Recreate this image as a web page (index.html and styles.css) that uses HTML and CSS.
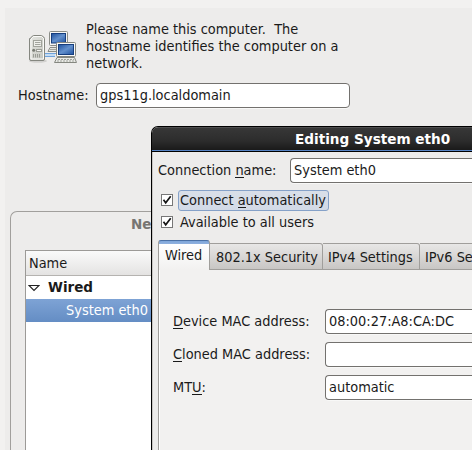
FILE: index.html
```html
<!DOCTYPE html>
<html lang="en">
<head>
<meta charset="utf-8">
<title>Network configuration</title>
<link rel="stylesheet" href="styles.css">
</head>
<body>
<main class="installer">
  <header class="intro">
    <svg class="intro-icon" width="48" height="34" viewBox="0 0 48 34">
      <defs>
        <linearGradient id="screen" x1="0" y1="0" x2="1" y2="1">
          <stop offset="0" stop-color="#2355a0"/><stop offset=".5" stop-color="#6390cc"/><stop offset="1" stop-color="#2456a3"/>
        </linearGradient>
        <linearGradient id="tower" x1="0" y1="0" x2="1" y2="1">
          <stop offset="0" stop-color="#e6e7e3"/><stop offset="1" stop-color="#c3c5be"/>
        </linearGradient>
      </defs>
      <ellipse cx="9" cy="31" rx="9" ry="1.800" fill="#d2d1cf"/>
      <rect x="20.500" y="1.500" width="18" height="14" rx="1" fill="#f6f6f4" stroke="#8b8d87"/>
      <rect x="22" y="3" width="15" height="10.500" fill="#163e7e"/>
      <rect x="23" y="4" width="13" height="8.500" fill="url(#screen)"/>
      <path d="M21 17.500h7v4h-9z" fill="#e4e5e1" stroke="#8b8d87"/>
      <path d="M21 19.500h6" stroke="#a4a69f"/>
      <path d="M16 23.500h11M16 26.500h10" stroke="#6fa3dc"/>
      <path d="M16 25h10" stroke="#c4dcf3" stroke-width="2"/>
      <path d="M1.500 8.500q0-1.500 3-3h8q3 1.500 3 3v20.500q0 1.500-1.500 1.500H2q-1.500 0-1.500-1.500V8.500z" fill="url(#tower)" stroke="#858780"/>
      <path d="M2 29V9l2.500-2.500h8l2 2V29z" fill="none" stroke="#fafaf8"/>
      <rect x="4.500" y="10.500" width="8" height="6" fill="#eeefeb" stroke="#a1a39c"/>
      <path d="M6 12.500h5.500M6 14.500h5.500" stroke="#a2a49d"/>
      <circle cx="4.700" cy="20.200" r="1.500" fill="#777a72"/>
      <rect x="7.500" y="19.500" width="5" height="2" fill="#f4f4f1" stroke="#9b9d96"/>
      <path d="M4.500 24v3.500M6.500 24v3.500M8.500 24v3.500M10.500 24v3.500" stroke="#9b9d96"/>
      <rect x="27.500" y="12.500" width="19" height="14" rx="1" fill="#f9f9f7" stroke="#858780"/>
      <rect x="29" y="14" width="16" height="11" fill="#163e7e"/>
      <rect x="30" y="15" width="14" height="9" fill="url(#screen)"/>
      <path d="M28 27.500h17.500l2 5H25.500z" fill="#e9eae6" stroke="#858780"/>
      <path d="M29 29.500h16M28 31h17" stroke="#a1a39c" stroke-dasharray="2 1"/>
    </svg>
    <p class="intro-text">Please name this computer.&nbsp; The<br>hostname identifies the computer on a<br>network.</p>
  </header>
  <div class="host-row">
    <label class="host-label">Hostname:</label>
    <div class="entry host-entry">gps11g.localdomain</div>
  </div>
  <section class="connections">
    <h2 class="connections-title">Ne</h2>
    <div class="list">
      <div class="list-head">Name</div>
      <div class="list-group">
        <svg class="expander" width="12" height="8" viewBox="0 0 12 8"><path d="M1 1.500h10L6 6.500z" fill="#fff" stroke="#222" stroke-width="1.100"/></svg>
        <span>Wired</span>
      </div>
      <div class="list-row">System eth0</div>
    </div>
  </section>
</main>

<section class="dialog">
  <h1 class="titlebar"><span>Editing System eth0</span></h1>
  <div class="client">
    <div class="name-row">
      <label class="name-label">Connection <u>n</u>ame:</label>
      <div class="entry name-entry">System eth0</div>
    </div>
    <div class="check-row">
      <svg class="check" width="12" height="12" viewBox="0 0 12 12"><rect x=".5" y=".5" width="11" height="11" fill="#fff" stroke="#777"/><path d="M2.500 5.800l2.200 3L9.700 2.300" fill="none" stroke="#151515" stroke-width="1.700"/></svg>
      <span class="check-label focused">Connect <u>a</u>utomatically</span>
    </div>
    <div class="check-row">
      <svg class="check" width="12" height="12" viewBox="0 0 12 12"><rect x=".5" y=".5" width="11" height="11" fill="#fff" stroke="#777"/><path d="M2.500 5.800l2.200 3L9.700 2.300" fill="none" stroke="#151515" stroke-width="1.700"/></svg>
      <span class="check-label">Available to all users</span>
    </div>
    <nav class="tabs">
      <span class="tab active">Wired</span>
      <span class="tab security">802.1x Security</span>
      <span class="tab ipv4">IPv4 Settings</span>
      <span class="tab ipv6">IPv6 Se</span>
    </nav>
    <div class="panel">
      <div class="field"><label class="field-label"><u>D</u>evice MAC address:</label><div class="entry field-entry">08:00:27:A8:CA:DC</div></div>
      <div class="field"><label class="field-label"><u>C</u>loned MAC address:</label><div class="entry field-entry"></div></div>
      <div class="field"><label class="field-label">MT<u>U</u>:</label><div class="entry field-entry">automatic</div></div>
    </div>
  </div>
</section>
</body>
</html>
```
FILE: styles.css
```css
* { box-sizing: border-box; }
html, body { margin: 0; width: 472px; height: 450px; overflow: hidden; }
body {
  position: relative;
  padding: 8px 0 0 5px;
  background: #f2f1f0;
  color: #1a1a1a;
  font: 14.4px/17px "DejaVu Sans Condensed", "DejaVu Sans", sans-serif;
  white-space: nowrap;
}
h1, h2, p { margin: 0; font: inherit; }
u { text-decoration: none; border-bottom: 1px solid currentColor; display: inline-block; height: 16px; }

.entry {
  height: 25px;
  padding: 0 3px;
  border: 1px solid #73716e;
  border-radius: 4px;
  background: #fff;
  line-height: 23px;
  box-shadow: 0 1px 0 #f8f8f7;
}

.installer { height: 442px; padding: 13px 0 0 5px; background: #edeceb; }
.intro { display: flex; align-items: flex-start; }
.intro-icon { margin: 9px 9px 0 19px; flex: none; }
.host-row { display: flex; align-items: center; margin-top: 11px; padding-left: 8px; }
.host-label { width: 78px; }
.host-entry { width: 254px; }
.connections {
  height: 239px;
  margin-top: 103px;
  padding: 4px 0 0 14px;
  border: 1px solid #a19f9c;
  border-right: 0;
  border-bottom: 0;
  border-radius: 7px 0 0 0;
}
.connections-title {
  padding-left: 106px;
  color: #777572;
  font: bold 13.5px/17px "DejaVu Sans", sans-serif;
}
.list { height: 200px; margin-top: 17px; border: 1px solid #9c9a97; border-bottom: 0; background: #fff; }
.list-head {
  height: 25px;
  padding-left: 3px;
  border-bottom: 1px solid #b5b3b0;
  background: linear-gradient(#fafafa, #e4e3e2);
  line-height: 25px;
}
.list-group { display: flex; align-items: center; height: 23px; padding-left: 2px; font: bold 13.5px/23px "DejaVu Sans", sans-serif; }
.expander { margin-right: 8px; }
.list-row { height: 23px; padding-left: 40px; background: linear-gradient(#7ea3d5, #648dc4); color: #fff; line-height: 23px; }

.dialog {
  position: absolute;
  left: 151px;
  top: 126px;
  width: 321px;
  height: 324px;
  border: 1px solid #000;
  border-width: 1px 0 0 1px;
  border-radius: 7px 0 0 0;
  background: #edeceb;
  overflow: hidden;
}
.titlebar {
  height: 25px;
  padding-left: 143px;
  border-bottom: 1px solid #000;
  background: linear-gradient(#666 0, #373737 1px, #2c2c2c 14px, #1a1a1a 23px, #5683c4 23px);
  color: #fff;
  font: bold 13.6px/25px "DejaVu Sans", sans-serif;
}
.client { padding: 6px 0 0 5px; border-left: 1px solid #c9c7c4; }
.name-row { display: flex; align-items: center; }
.name-label { width: 132px; }
.name-entry { flex: 1; border-right: 0; border-radius: 4px 0 0 4px; }
.check-row { display: flex; align-items: center; height: 22px; padding-left: 3px; }
.name-row + .check-row { margin-top: 6px; }
.check { margin-right: 5px; }
.check-label { padding: 1px; border: 1px solid transparent; }
.focused { width: 151px; height: 21px; border-color: #85a1c8; border-radius: 3px; background: linear-gradient(#d9dfe8, #d2dae7); }
.tabs { display: flex; align-items: flex-end; height: 37px; overflow: hidden; }
.tab {
  flex: none;
  height: 27px;
  border: 1px solid #a09e9b;
  border-left: 0;
  border-radius: 0 3px 0 0;
  background: linear-gradient(#e8e7e6, #c8c6c4);
  line-height: 27px;
  padding-left: 6px;
}
.active {
  width: 52px;
  height: 30px;
  border-left: 1px solid #a09e9b;
  border-bottom: 0;
  border-top-color: #4a70a5;
  border-radius: 3px 3px 0 0;
  background: linear-gradient(#7ea6da 0, #8fb0de 3px, #fff 3px, #f2f1f0 100%);
  line-height: 28px;
}
.security { width: 113px; }
.ipv4 { width: 97px; padding-left: 5px; }
.ipv6 { width: 52px; padding-left: 5px; border-right: 0; border-radius: 0; }
.panel { height: 180px; padding: 39px 0 0 14px; border-left: 1px solid #a09e9b; background: #f2f1f0; box-shadow: inset 1px 0 #fff; }
.field { display: flex; align-items: center; margin-bottom: 8px; }
.field-label { width: 152px; }
.field-entry { flex: 1; border-right: 0; border-radius: 4px 0 0 4px; }
```
